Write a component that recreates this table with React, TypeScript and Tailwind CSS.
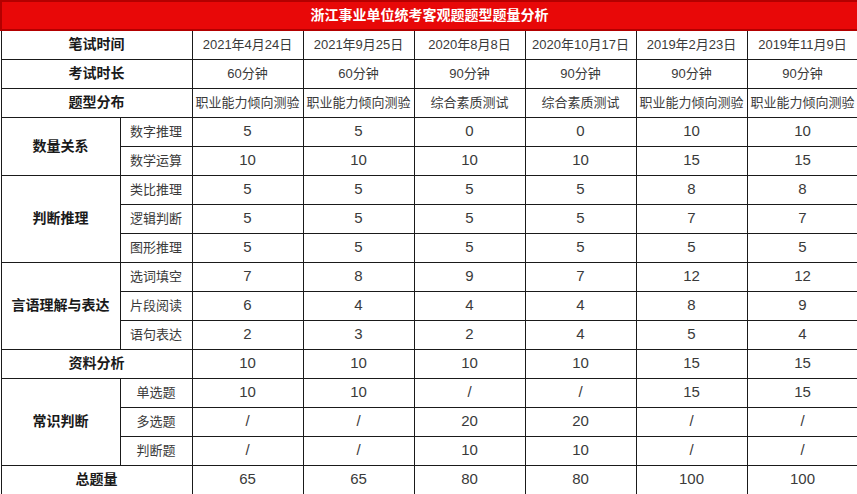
import React from "react";

type Row = {
  group?: string;
  span?: number;
  sub?: string;
  values: string[];
  full?: string;
};

const font = {
  fontFamily: '"Liberation Sans", "Noto Sans CJK SC", sans-serif',
};

const headRows: { label: string; values: string[] }[] = [
  {
    label: "笔试时间",
    values: ["2021年4月24日", "2021年9月25日", "2020年8月8日", "2020年10月17日", "2019年2月23日", "2019年11月9日"],
  },
  { label: "考试时长", values: ["60分钟", "60分钟", "90分钟", "90分钟", "90分钟", "90分钟"] },
  {
    label: "题型分布",
    values: ["职业能力倾向测验", "职业能力倾向测验", "综合素质测试", "综合素质测试", "职业能力倾向测验", "职业能力倾向测验"],
  },
];

const rows: Row[] = [
  { group: "数量关系", span: 2, sub: "数字推理", values: ["5", "5", "0", "0", "10", "10"] },
  { sub: "数学运算", values: ["10", "10", "10", "10", "15", "15"] },
  { group: "判断推理", span: 3, sub: "类比推理", values: ["5", "5", "5", "5", "8", "8"] },
  { sub: "逻辑判断", values: ["5", "5", "5", "5", "7", "7"] },
  { sub: "图形推理", values: ["5", "5", "5", "5", "5", "5"] },
  { group: "言语理解与表达", span: 3, sub: "选词填空", values: ["7", "8", "9", "7", "12", "12"] },
  { sub: "片段阅读", values: ["6", "4", "4", "4", "8", "9"] },
  { sub: "语句表达", values: ["2", "3", "2", "4", "5", "4"] },
  { full: "资料分析", values: ["10", "10", "10", "10", "15", "15"] },
  { group: "常识判断", span: 3, sub: "单选题", values: ["10", "10", "/", "/", "15", "15"] },
  { sub: "多选题", values: ["/", "/", "20", "20", "/", "/"] },
  { sub: "判断题", values: ["/", "/", "10", "10", "/", "/"] },
  { full: "总题量", values: ["65", "65", "80", "80", "100", "100"] },
];

const cell = "border border-[#1a1a1a] h-[29px] p-0 text-center align-middle";
const label = `${cell} text-[14px] font-bold text-[#1a1a1a]`;
const data = `${cell} text-[13px] text-[#3a3a3a]`;
const num = `${cell} text-[15px] text-[#3a3a3a]`;

export default function App() {
  return (
    <div className="w-[857px] h-[494px] bg-white" style={font}>
      <table className="w-[857px] table-fixed border-collapse">
        <colgroup>
          <col className="w-[119px]" />
          <col className="w-[72px]" />
          <col className="w-[111px]" />
          <col className="w-[111px]" />
          <col className="w-[111px]" />
          <col className="w-[111px]" />
          <col className="w-[111px]" />
          <col className="w-[111px]" />
        </colgroup>
        <tbody>
          <tr>
            <td
              colSpan={8}
              className="h-[29px] border-2 border-[#b30000] bg-[#e80808] p-0 text-center text-[14px] font-bold text-white"
            >
              浙江事业单位统考客观题题型题量分析
            </td>
          </tr>
          {headRows.map((r) => (
            <tr key={r.label}>
              <td colSpan={2} className={label}>
                {r.label}
              </td>
              {r.values.map((v, i) => (
                <td key={i} className={`${data} whitespace-nowrap text-[13.5px]`}>
                  {v}
                </td>
              ))}
            </tr>
          ))}
          {rows.map((r, idx) => (
            <tr key={idx}>
              {r.full ? (
                <td colSpan={2} className={label}>
                  {r.full}
                </td>
              ) : (
                <>
                  {r.group && (
                    <td rowSpan={r.span} className={label}>
                      {r.group}
                    </td>
                  )}
                  <td className={data}>{r.sub}</td>
                </>
              )}
              {r.values.map((v, i) => (
                <td key={i} className={num}>
                  {v}
                </td>
              ))}
            </tr>
          ))}
        </tbody>
      </table>
    </div>
  );
}
